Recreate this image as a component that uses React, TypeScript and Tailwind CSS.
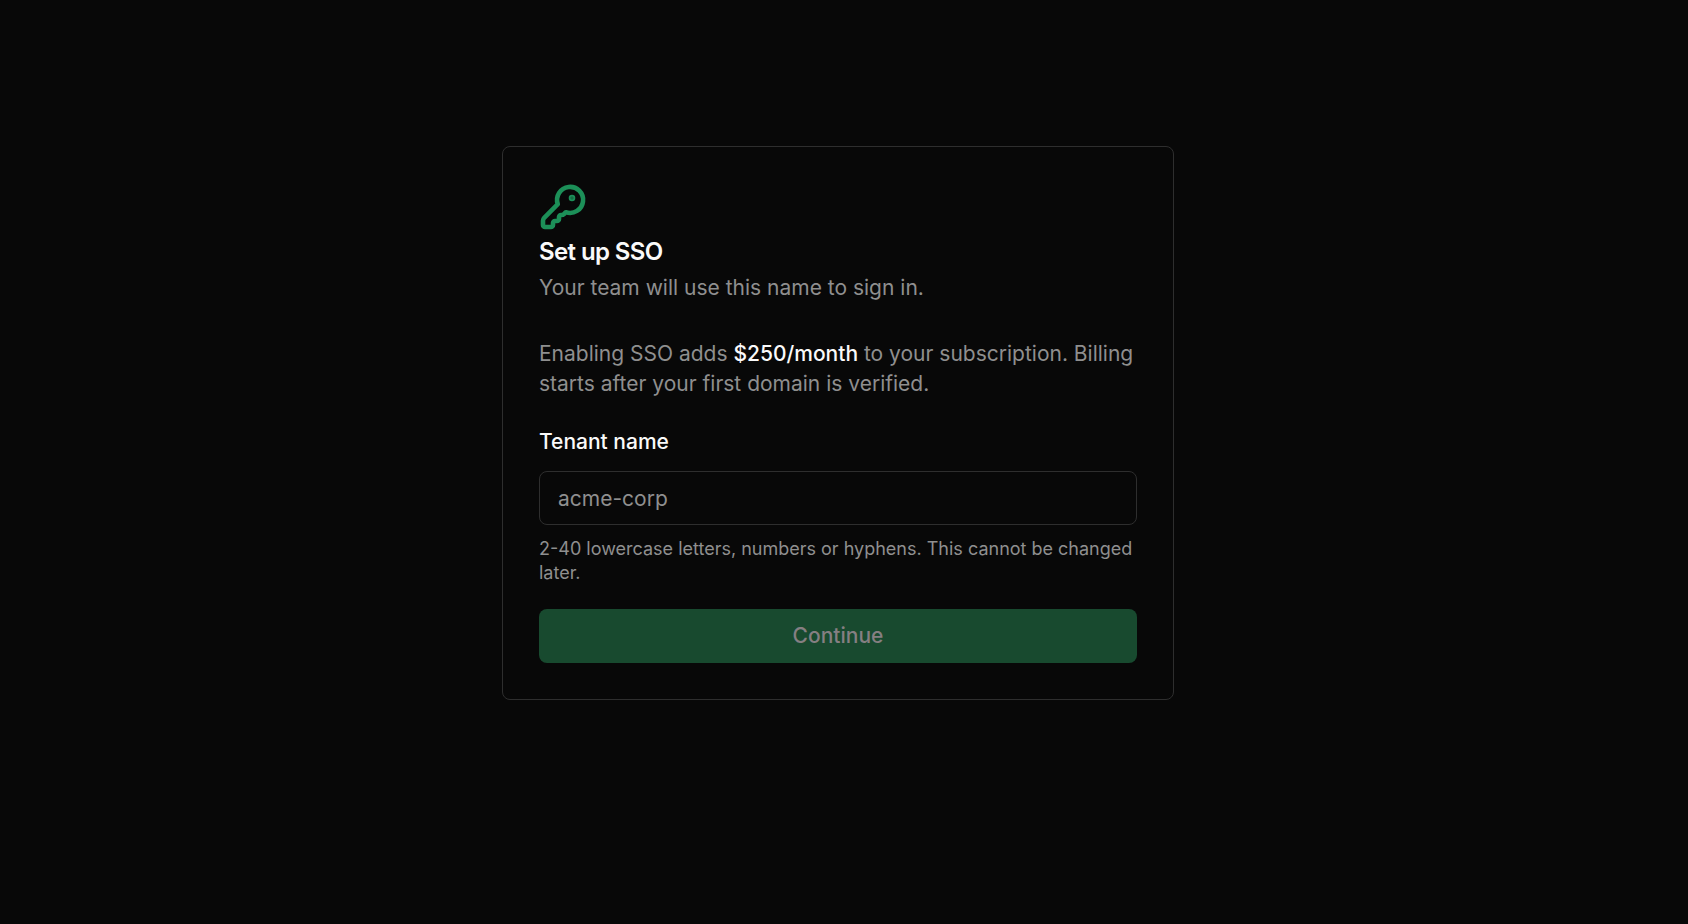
import { useState } from 'react';
import { KeyRound } from 'lucide-react';

export default function App() {
  const [tenant, setTenant] = useState('');
  const valid = /^[a-z0-9-]{2,40}$/.test(tenant);

  return (
    <div className="flex min-h-screen flex-col bg-[#080808] font-['Inter',sans-serif] text-[#fafafa]">
      <main className="flex flex-1 flex-col items-center pt-[146px] pr-7 pl-4">
        <section className="w-full max-w-[672px] rounded-lg border border-[#2e2e2e] p-9">
          <header className="mb-9">
            <KeyRound strokeWidth={2.3} className="h-12 w-12 text-[#1c8f58]" />
            <h1 className="mt-1 text-2xl leading-[34px] font-semibold tracking-tight">Set up SSO</h1>
            <p className="mt-1 text-[21px] leading-[30px] text-[#8f8f8f]">
              Your team will use this name to sign in.
            </p>
          </header>

          <form onSubmit={(e) => e.preventDefault()}>
            <p className="text-[21px] leading-[30px] text-[#8f8f8f]">
              Enabling SSO adds <span className="font-medium text-[#fafafa]">$250/month</span> to your
              subscription. Billing starts after your first domain is verified.
            </p>

            <label htmlFor="tenant" className="mt-7 block text-[21px] leading-[30px] font-medium">
              Tenant name
            </label>
            <input
              id="tenant"
              value={tenant}
              onChange={(e) => setTenant(e.target.value)}
              placeholder="acme-corp"
              className="mt-3.5 h-[54px] w-full rounded-lg border border-[#2e2e2e] bg-transparent px-[18px] text-[21px] outline-none placeholder:text-[#8f8f8f]"
            />
            <p className="mt-3 text-lg leading-6 text-[#8f8f8f]">
              2-40 lowercase letters, numbers or hyphens. This cannot be changed later.
            </p>

            <button
              type="submit"
              disabled={!valid}
              className="mt-6 h-[54px] w-full rounded-lg bg-[#1c8f58] text-[21px] font-medium text-white disabled:bg-[#184a2f] disabled:text-[#857f82]"
            >
              Continue
            </button>
          </form>
        </section>
      </main>
    </div>
  );
}
